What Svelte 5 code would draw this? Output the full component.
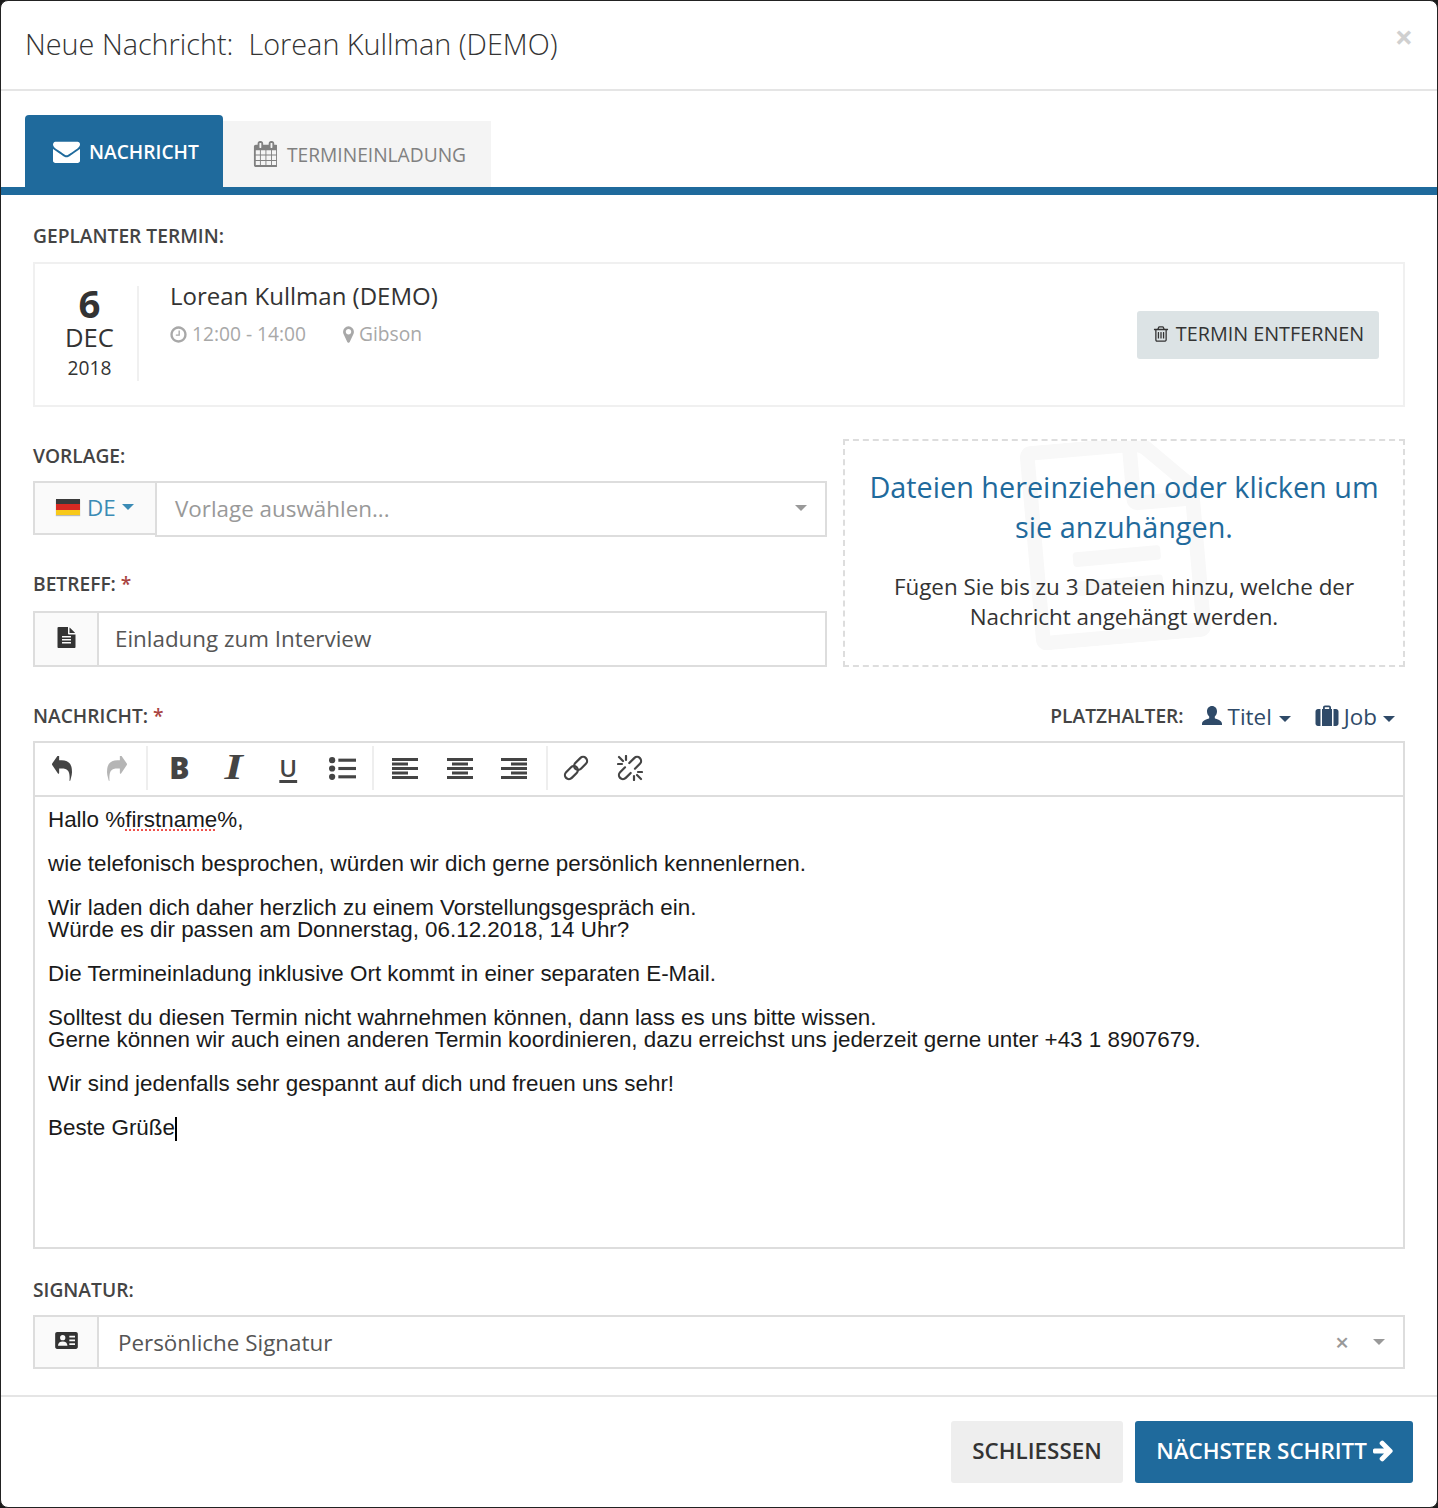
<script lang="ts">
	const paragraphs = [
		['wie telefonisch besprochen, würden wir dich gerne persönlich kennenlernen.'],
		[
			'Wir laden dich daher herzlich zu einem Vorstellungsgespräch ein.',
			'Würde es dir passen am Donnerstag, 06.12.2018, 14 Uhr?'
		],
		['Die Termineinladung inklusive Ort kommt in einer separaten E-Mail.'],
		[
			'Solltest du diesen Termin nicht wahrnehmen können, dann lass es uns bitte wissen.',
			'Gerne können wir auch einen anderen Termin koordinieren, dazu erreichst uns jederzeit gerne unter +43 1 8907679.'
		],
		['Wir sind jedenfalls sehr gespannt auf dich und freuen uns sehr!']
	];

	const alignRows = {
		left: [0, 0, 0, 0, 0],
		center: [0, 5, 0, 5, 0],
		right: [0, 10, 0, 10, 0]
	};
</script>

<div class="modal">
	<header class="modal-header">
		<h1>Neue Nachricht:&nbsp; Lorean Kullman (DEMO)</h1>
		<button class="close" type="button">×</button>
	</header>

	<div class="tabs">
		<div class="tab active">
			<svg viewBox="0 0 1792 1792" width="27" height="27"><path d="M1792 710v794q0 66-47 113t-113 47h-1472q-66 0-113-47t-47-113v-794q44 49 101 87 362 246 497 345 57 42 92.5 65.5t94.5 48 110 24.5h2q51 0 110-24.5t94.5-48 92.5-65.5q170-123 498-345 57-39 100-87zm0-294q0 79-49 151t-122 123q-376 261-468 325-10 7-42.5 30.5t-54 38-52 32.5-57.5 27-50 9h-2q-23 0-50-9t-57.5-27-52-32.5-54-38-42.5-30.5q-91-64-262-182.5t-205-142.5q-62-42-117-115.5t-55-136.5q0-78 41.5-130t118.5-52h1472q65 0 112.5 47t47.5 113z"/></svg>
			NACHRICHT
		</div>
		<div class="tab">
			<svg viewBox="0 0 1664 1792" width="24" height="26"><path d="M192 1664h288v-288h-288v288zm352 0h320v-288h-320v288zm-352-352h288v-320h-288v320zm352 0h320v-320h-320v320zm-352-384h288v-288h-288v288zm736 736h320v-288h-320v288zm-384-736h320v-288h-320v288zm768 736h288v-288h-288v288zm-384-352h320v-320h-320v320zm-352-864v-288q0-13-9.5-22.5t-22.5-9.5h-64q-13 0-22.5 9.5t-9.5 22.5v288q0 13 9.5 22.5t22.5 9.5h64q13 0 22.5-9.5t9.5-22.5zm736 864h288v-320h-288v320zm-384-384h320v-288h-320v288zm384 0h288v-288h-288v288zm32-480v-288q0-13-9.5-22.5t-22.5-9.5h-64q-13 0-22.5 9.5t-9.5 22.5v288q0 13 9.5 22.5t22.5 9.5h64q13 0 22.5-9.5t9.5-22.5zm384-64v1280q0 52-38 90t-90 38h-1408q-52 0-90-38t-38-90v-1280q0-52 38-90t90-38h128v-96q0-66 47-113t113-47h64q66 0 113 47t47 113v96h384v-96q0-66 47-113t113-47h64q66 0 113 47t47 113v96h128q52 0 90 38t38 90z"/></svg>
			TERMINEINLADUNG
		</div>
	</div>

	<div class="modal-body">
		<div class="label">GEPLANTER TERMIN:</div>
		<div class="appointment">
			<div class="date">
				<div class="day">6</div>
				<div class="month">DEC</div>
				<div class="year">2018</div>
			</div>
			<div class="details">
				<div class="name">Lorean Kullman (DEMO)</div>
				<div class="meta">
					<span class="meta-item time">
						<svg viewBox="0 0 1792 1792" width="19" height="19"><path d="M1024 544v448q0 14-9 23t-23 9h-320q-14 0-23-9t-9-23v-64q0-14 9-23t23-9h224v-352q0-14 9-23t23-9h64q14 0 23 9t9 23zm416 352q0-148-73-273t-198-198-273-73-273 73-198 198-73 273 73 273 198 198 273 73 273-73 198-198 73-273zm224 0q0 209-103 385.5t-279.5 279.5-385.5 103-385.5-103-279.5-279.5-103-385.5 103-385.5 279.5-279.5 385.5-103 385.5 103 279.5 279.5 103 385.5z"/></svg>
						12:00 - 14:00
					</span>
					<span class="meta-item">
						<svg viewBox="0 0 1792 1792" width="19" height="19"><path d="M1152 640q0-106-75-181t-181-75-181 75-75 181 75 181 181 75 181-75 75-181zm256 0q0 109-33 179l-364 774q-16 33-47.5 52t-67.5 19-67.5-19-46.5-52l-365-774q-33-70-33-179 0-212 150-362t362-150 362 150 150 362z"/></svg>
						Gibson
					</span>
				</div>
			</div>
			<button class="remove" type="button">
				<svg viewBox="0 0 1792 1792" width="18" height="18"><path d="M704 736v576q0 14-9 23t-23 9h-64q-14 0-23-9t-9-23v-576q0-14 9-23t23-9h64q14 0 23 9t9 23zm256 0v576q0 14-9 23t-23 9h-64q-14 0-23-9t-9-23v-576q0-14 9-23t23-9h64q14 0 23 9t9 23zm256 0v576q0 14-9 23t-23 9h-64q-14 0-23-9t-9-23v-576q0-14 9-23t23-9h64q14 0 23 9t9 23zm128 724v-948h-896v948q0 22 7 40.5t14.5 27 10.5 8.5h832q3 0 10.5-8.5t14.5-27 7-40.5zm-672-1076h448l-48-117q-7-9-17-11h-317q-10 2-17 11zm928 32v64q0 14-9 23t-23 9h-96v948q0 83-47 143.5t-113 60.5h-832q-66 0-113-58.5t-47-141.5v-952h-96q-14 0-23-9t-9-23v-64q0-14 9-23t23-9h309l70-167q15-37 54-63t79-26h320q40 0 79 26t54 63l70 167h309q14 0 23 9t9 23z"/></svg>
				TERMIN ENTFERNEN
			</button>
		</div>

		<div class="columns">
			<div class="form-col">
				<div class="label">VORLAGE:</div>
				<div class="template-group">
					<div class="lang">
						<span class="flag"></span>
						DE
						<span class="caret blue"></span>
					</div>
					<div class="template-select">
						<span>Vorlage auswählen...</span>
						<span class="caret gray"></span>
					</div>
				</div>
				<div class="label subject-label">BETREFF: <span class="req">*</span></div>
				<div class="input-group">
					<div class="addon">
						<svg viewBox="0 0 1792 1792" width="21" height="21"><path d="M1596 476q14 14 28 36h-472v-472q22 14 36 28zm-476 164h544v1056q0 40-28 68t-68 28h-1344q-40 0-68-28t-28-68v-1600q0-40 28-68t68-28h800v544q0 40 28 68t68 28zm160 736v-64q0-14-9-23t-23-9h-704q-14 0-23 9t-9 23v64q0 14 9 23t23 9h704q14 0 23-9t9-23zm0-256v-64q0-14-9-23t-23-9h-704q-14 0-23 9t-9 23v64q0 14 9 23t23 9h704q14 0 23-9t9-23zm0-256v-64q0-14-9-23t-23-9h-704q-14 0-23 9t-9 23v64q0 14 9 23t23 9h704q14 0 23-9t9-23z"/></svg>
					</div>
					<div class="input-value">Einladung zum Interview</div>
				</div>
			</div>

			<div class="dropzone">
				<svg class="watermark" viewBox="0 0 1792 1792" width="205" height="205">
					<path d="M1596 380q28 28 48 76t20 88v1152q0 40-28 68t-68 28h-1344q-40 0-68-28t-28-68v-1600q0-40 28-68t68-28h896q40 0 88 20t76 48zm-444-244v376h376q-10-29-22-41l-313-313q-12-12-41-22zm384 1528v-1024h-416q-40 0-68-28t-28-68v-416h-768v1536h1280z"/>
					<rect x="512" y="960" width="768" height="128" rx="32"/>
					<rect x="512" y="1216" width="768" height="128" rx="32"/>
				</svg>
				<div class="drop-title">Dateien hereinziehen oder klicken um sie anzuhängen.</div>
				<div class="drop-text">Fügen Sie bis zu 3 Dateien hinzu, welche der Nachricht angehängt werden.</div>
			</div>
		</div>

		<div class="message-head">
			<div class="label">NACHRICHT: <span class="req">*</span></div>
			<div class="placeholders">
				<span class="label">PLATZHALTER:</span>
				<span class="ph first">
					<svg viewBox="0 0 24 24" width="24" height="24"><path d="M12 2c-3 0-5 2.300-5 5.500 0 2 1 4 2.200 5v1.700c-2 1-7 2-7.200 5.500V21h20v-1.300c-.2-3.500-5.200-4.500-7.200-5.500v-1.700c1.200-1 2.200-3 2.200-5C17 4.300 15 2 12 2z"/></svg>
					Titel
					<span class="caret navy"></span>
				</span>
				<span class="ph job">
					<svg viewBox="0 0 24 22" width="24" height="22"><path fill-rule="evenodd" d="M8 4V2.500C8 1.400 8.900.5 10 .5h4c1.100 0 2 .9 2 2V4h1v17H7V4h1zm1.800 0h4.400V2.300H9.800V4zM5.500 4v17H3c-1.400 0-2.500-1.100-2.500-2.500v-12C.5 5.100 1.600 4 3 4h2.500zm13 0H21c1.400 0 2.500 1.100 2.500 2.500v12c0 1.400-1.100 2.500-2.500 2.500h-2.500V4z"/></svg>
					Job
					<span class="caret navy"></span>
				</span>
			</div>
		</div>

		<div class="editor">
			<div class="toolbar">
				<div class="tool-group history">
					<span class="tool">
						<svg viewBox="0 128 1792 1536" width="20" height="25" preserveAspectRatio="none"><path d="M1792 1120q0 166-127 451-3 7-10.5 24t-13.5 30-13 22q-12 17-28 17-15 0-23.5-10t-8.500-25q0-9 2.500-26.500t2.500-23.500q5-68 5-123 0-101-17.500-181t-48.500-138.500-80-101-105.500-69.500-133-42.500-154-21.500-175.500-6h-224v256q0 26-19 45t-45 19-45-19l-512-512q-19-19-19-45t19-45l512-512q19-19 45-19t45 19 19 45v256h224q713 0 875 403 53 134 53 333z"/></svg>
					</span>
					<span class="tool muted">
						<svg viewBox="0 128 1792 1536" width="20" height="25" preserveAspectRatio="none"><path transform="matrix(-1 0 0 1 1792 0)" d="M1792 1120q0 166-127 451-3 7-10.5 24t-13.5 30-13 22q-12 17-28 17-15 0-23.5-10t-8.500-25q0-9 2.500-26.500t2.500-23.500q5-68 5-123 0-101-17.500-181t-48.500-138.500-80-101-105.500-69.500-133-42.500-154-21.500-175.500-6h-224v256q0 26-19 45t-45 19-45-19l-512-512q-19-19-19-45t19-45l512-512q19-19 45-19t45 19 19 45v256h224q713 0 875 403 53 134 53 333z"/></svg>
					</span>
				</div>
				<div class="tool-group format">
					<span class="tool letter bold">B</span>
					<span class="tool letter italic"><span>I</span></span>
					<span class="tool letter under">U</span>
					<span class="tool">
						<svg viewBox="0 0 26 24" width="27" height="25"><circle cx="3" cy="4" r="3"/><circle cx="3" cy="12" r="3"/><circle cx="3" cy="20" r="3"/><rect x="9" y="2.500" width="17" height="3"/><rect x="9" y="10.500" width="17" height="3"/><rect x="9" y="18.500" width="17" height="3"/></svg>
					</span>
				</div>
				<div class="tool-group align">
					{#each Object.values(alignRows) as offsets}
						<span class="tool">
							<svg viewBox="0 0 26 21" width="26" height="21">
								{#each offsets as x, i}
									<rect {x} y={i * 4.5} width={i % 2 ? 16 : 26} height="3"/>
								{/each}
							</svg>
						</span>
					{/each}
				</div>
				<div class="tool-group links">
					<span class="tool">
						<svg class="chain" viewBox="0 0 26 26" width="26" height="26">
							<g transform="rotate(-45 13 13)">
								<rect x="-1" y="9" width="15" height="8" rx="4"/>
								<rect x="12" y="9" width="15" height="8" rx="4"/>
							</g>
						</svg>
					</span>
					<span class="tool">
						<svg class="chain" viewBox="0 0 26 26" width="26" height="26">
							<g transform="rotate(-45 13 13)">
								<path d="M10 9H3a4 4 0 0 0 0 8h7"/>
								<path d="M16 9h7a4 4 0 0 1 0 8h-7"/>
							</g>
							<path d="M9 1v4M2 2l4 4M1 9h4M17 21v4M20 20l4 4M21 17h4"/>
						</svg>
					</span>
				</div>
			</div>
			<div class="content">
				<p>Hallo %<span class="misspelled">firstname</span>%,</p>
				{#each paragraphs as lines}
					<p>
						{#each lines as line}
							<span class="line">{line}</span>
						{/each}
					</p>
				{/each}
				<p>Beste Grüße<span class="cursor"></span></p>
			</div>
		</div>

		<div class="label signature-label">SIGNATUR:</div>
		<div class="input-group signature">
			<div class="addon">
				<svg viewBox="0 0 24 18" width="23" height="17"><path fill-rule="evenodd" d="M2 0h20c1.100 0 2 .9 2 2v14c0 1.100-.9 2-2 2H2c-1.100 0-2-.9-2-2V2C0 .9.900 0 2 0zm6 3.200a2.800 2.800 0 1 0 0 5.600 2.800 2.800 0 0 0 0-5.600zM3 14.500h10c0-3-2-4.500-5-4.500s-5 1.500-5 4.500zM15 4v1.800h6V4h-6zm0 4v1.800h6V8h-6zm0 4v1.800h6V12h-6z"/></svg>
			</div>
			<div class="input-value">Persönliche Signatur</div>
			<span class="clear">×</span>
			<span class="caret gray"></span>
		</div>
	</div>

	<footer class="modal-footer">
		<button class="btn default" type="button">SCHLIESSEN</button>
		<button class="btn primary" type="button">
			NÄCHSTER SCHRITT
			<svg viewBox="0 0 1792 1792" width="24" height="24"><path d="M1472 960q0 54-37 91l-651 651q-39 37-91 37-51 0-90-37l-75-75q-38-38-38-91t38-91l293-293h-704q-52 0-84.500-37.500t-32.500-90.500v-128q0-53 32.500-90.500t84.500-37.500h704l-293-294q-38-36-38-90t38-90l75-75q38-38 90-38 53 0 91 38l651 651q37 35 37 90z" transform="translate(0 -64)"/></svg>
		</button>
	</footer>
</div>

<style>
	:global(body) {
		margin: 0;
		background: #1a1a1a;
	}

	* {
		box-sizing: border-box;
	}

	svg {
		fill: currentColor;
		flex-shrink: 0;
	}

	.modal {
		height: 1508px;
		background: #fff;
		border: 1px solid #222;
		border-radius: 8px;
		overflow: hidden;
		font-family: 'Open Sans', sans-serif;
		color: #333;
	}

	.modal-header {
		height: 90px;
		border-bottom: 2px solid #e5e5e5;
		padding: 0 24px;
		display: flex;
		align-items: center;
		justify-content: space-between;
	}

	h1 {
		margin: 0 0 3px;
		font-size: 28.8px;
		font-weight: 300;
		color: #333;
	}

	.close {
		border: none;
		background: none;
		padding: 0;
		font: 700 32px/1 'Open Sans', sans-serif;
		color: #d0d0d0;
		align-self: flex-start;
		margin: 20px 0 0 0;
	}

	.tabs {
		display: flex;
		align-items: flex-end;
		margin-top: 24px;
		padding-left: 24px;
		border-bottom: 8px solid #1f6a9c;
	}

	.tab {
		height: 66px;
		width: 268px;
		padding-left: 30px;
		display: flex;
		align-items: center;
		gap: 10px;
		background: #f4f4f4;
		color: #808080;
		font-size: 19.2px;
	}

	.tab.active {
		height: 72px;
		width: 198px;
		padding: 0 0 0 28px;
		background: #1f6a9c;
		color: #fff;
		font-weight: 600;
		border-radius: 4px 4px 0 0;
		gap: 9px;
	}

	.modal-body {
		padding: 29px 32px 0;
	}

	.label {
		font-size: 19.2px;
		line-height: 24px;
		font-weight: 600;
		color: #444;
	}

	.req {
		color: #a94442;
	}

	.appointment {
		height: 145px;
		margin-top: 14px;
		border: 2px solid #f0f0f0;
		display: flex;
		align-items: flex-start;
		padding: 22px 24px 0 0;
	}

	.date {
		width: 104px;
		height: 95px;
		padding-left: 7px;
		border-right: 2px solid #f0f0f0;
		text-align: center;
		display: flex;
		flex-direction: column;
		align-items: center;
	}

	.day {
		font-size: 38.4px;
		font-weight: 700;
		line-height: 34px;
		margin-bottom: 2px;
		color: #333;
	}

	.month {
		font-size: 25.6px;
		line-height: 32px;
		color: #333;
	}

	.year {
		font-size: 19.2px;
		line-height: 28px;
		color: #333;
	}

	.details {
		flex: 1;
		margin-top: -2px;
		padding-left: 31px;
	}

	.name {
		font-size: 24px;
		line-height: 24px;
		color: #333;
	}

	.meta {
		display: flex;
		margin-top: 13px;
		font-size: 19.2px;
		line-height: 26px;
		color: #a8a8a8;
	}

	.meta-item {
		display: flex;
		align-items: center;
		gap: 1px;
	}

	.meta-item.time {
		width: 169px;
		gap: 4px;
	}

	.meta-item.time svg {
		margin-left: -1px;
	}

	.remove {
		width: 242px;
		height: 48px;
		margin-top: 25px;
		padding: 0 0 3px;
		border: none;
		border-radius: 3px;
		background: #dce3e5;
		color: #333;
		font: 500 19.8px 'Open Sans', sans-serif;
		display: flex;
		align-items: center;
		justify-content: center;
		gap: 6px;
	}

	.columns {
		display: grid;
		grid-template-columns: 794px 562px;
		gap: 16px;
		margin-top: 32px;
	}

	.form-col {
		padding-top: 5px;
	}

	.template-group {
		display: flex;
		align-items: flex-start;
		margin-top: 13px;
	}

	.lang {
		width: 122px;
		height: 54px;
		border: 2px solid #ddd;
		border-right: none;
		background: #fafafa;
		display: flex;
		align-items: center;
		padding: 0 0 2px 21px;
		font-size: 22.4px;
		color: #3b8bb5;
		gap: 7px;
	}

	.flag {
		width: 24px;
		height: 16px;
		background: linear-gradient(#3a3a3a 33%, #d92a22 33%, #d92a22 66%, #f8c91a 66%);
		box-shadow: 0 1px 1px rgba(0, 0, 0, 0.25);
	}

	.template-select {
		flex: 1;
		height: 56px;
		border: 2px solid #ddd;
		display: flex;
		align-items: center;
		justify-content: space-between;
		padding: 0 18px 2px 18px;
		font-size: 22.4px;
		color: #999;
	}

	.caret {
		width: 0;
		height: 0;
		border-left: 6px solid transparent;
		border-right: 6px solid transparent;
		border-top: 6px solid currentColor;
		flex-shrink: 0;
	}

	.caret.blue {
		color: #3b8bb5;
		margin-left: -1px;
	}

	.caret.gray {
		color: #999;
	}

	.caret.navy {
		color: #2f4a68;
		margin: 5px 0 0 3px;
	}

	.subject-label {
		margin-top: 35px;
	}

	.input-group {
		height: 56px;
		margin-top: 15px;
		border: 2px solid #ddd;
		display: flex;
		align-items: center;
	}

	.addon {
		width: 64px;
		height: 100%;
		background: #fafafa;
		border-right: 2px solid #ddd;
		display: flex;
		align-items: center;
		justify-content: center;
		color: #333;
		padding-bottom: 4px;
	}

	.input-value {
		flex: 1;
		padding: 0 0 2px 16px;
		font-size: 22.4px;
		color: #555;
	}

	.dropzone {
		position: relative;
		height: 228px;
		border: 2px dashed #ddd;
		text-align: center;
		padding: 26px 20px 0;
		overflow: hidden;
	}

	.watermark {
		position: absolute;
		left: 168px;
		top: -2px;
		color: #f8f8f8;
		transform: rotate(-5deg);
	}

	.drop-title {
		position: relative;
		font-size: 28.8px;
		line-height: 40px;
		color: #1f6a9c;
	}

	.drop-text {
		position: relative;
		margin-top: 25px;
		padding: 0 20px;
		font-size: 22.4px;
		line-height: 30px;
		color: #333;
	}

	.message-head {
		display: flex;
		justify-content: space-between;
		align-items: center;
		margin-top: 37px;
		height: 24px;
	}

	.placeholders {
		display: flex;
		align-items: center;
		padding-right: 10px;
	}

	.ph {
		display: flex;
		align-items: center;
		gap: 4px;
		font-size: 22.4px;
		color: #2f4a68;
		margin-left: 24px;
	}

	.ph.first {
		margin-left: 16px;
	}

	.ph.job {
		gap: 5px;
	}

	.ph.job .caret {
		margin-left: 1px;
	}

	.editor {
		height: 508px;
		margin-top: 13px;
		border: 2px solid #ddd;
	}

	.toolbar {
		height: 54px;
		padding-bottom: 2px;
		border-bottom: 2px solid #ddd;
		display: flex;
		align-items: center;
		color: #444;
	}

	.tool-group {
		height: 44px;
		display: flex;
		align-items: center;
		border-right: 2px solid #eee;
	}

	.history {
		padding-right: 2px;
	}

	.format {
		padding: 0 2px 0 4px;
	}

	.align {
		padding: 0 4px;
	}

	.links {
		padding-left: 1px;
		border-right: none;
	}

	.tool {
		width: 54.5px;
		display: flex;
		align-items: center;
		justify-content: center;
	}

	.tool.muted {
		color: #b5b5b5;
	}

	.chain {
		fill: none;
		stroke: currentColor;
		stroke-width: 2.2;
		stroke-linecap: round;
	}

	.letter {
		font-size: 30px;
		line-height: 30px;
		color: #444;
	}

	.bold {
		font-family: 'Open Sans', sans-serif;
		font-weight: 800;
	}

	.italic {
		font-family: 'Liberation Serif', serif;
		font-style: italic;
		font-weight: 700;
		font-size: 35px;
	}

	.italic span {
		transform: scaleX(1.35);
	}

	.under {
		font-family: 'Open Sans', sans-serif;
		font-size: 24px;
		font-weight: 600;
		text-decoration: underline;
		text-decoration-thickness: 3px;
		text-underline-offset: 3px;
	}

	.content {
		padding: 12px 13px;
		font-family: 'Liberation Sans', Arial, sans-serif;
		font-size: 22.4px;
		line-height: 22px;
		color: #1a1a1a;
	}

	p {
		margin: 0 0 22px;
	}

	.line {
		display: block;
	}

	.misspelled {
		text-decoration: underline dotted #f0504a 2px;
		text-underline-offset: 2px;
	}

	.cursor {
		display: inline-block;
		width: 2px;
		height: 24px;
		background: #000;
		vertical-align: -6px;
	}

	.signature-label {
		margin-top: 29px;
	}

	.signature {
		height: 54px;
		margin-top: 13px;
		padding-right: 18px;
	}

	.signature .input-value {
		padding: 0 0 0 19px;
	}

	.clear {
		font-size: 24px;
		line-height: 1;
		font-weight: 600;
		color: #999;
		margin-right: 24px;
	}

	.modal-footer {
		margin-top: 26px;
		border-top: 2px solid #e5e5e5;
		padding: 24px 24px 0;
		display: flex;
		justify-content: flex-end;
		gap: 12px;
	}

	.btn {
		height: 62px;
		padding: 0 0 3px;
		border: none;
		border-radius: 3px;
		font: 600 22.4px 'Open Sans', sans-serif;
		display: flex;
		align-items: center;
		justify-content: center;
	}

	.btn.default {
		width: 172px;
		background: #eee;
		color: #333;
	}

	.btn.primary {
		width: 278px;
		padding-left: 5px;
		background: #1f6a9c;
		color: #fff;
		gap: 6px;
	}
</style>
